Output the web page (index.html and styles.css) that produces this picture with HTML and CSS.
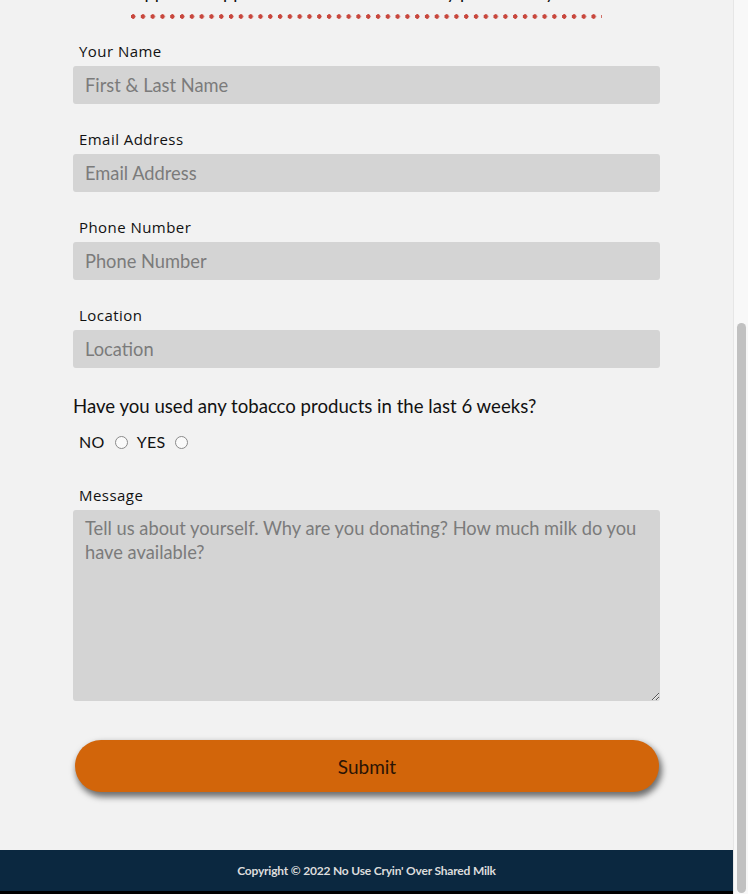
FILE: index.html
```html
<!DOCTYPE html>
<html lang="en">
<head>
<meta charset="utf-8">
<title>Donate Milk</title>
<link rel="stylesheet" href="styles.css">
</head>
<body>
<div class="window">
  <div class="page">
    <main class="content">
      <div class="intro">
        <p class="intro-text">Approved applicants will be contacted by phone or by email</p>
        <div class="dots"></div>
      </div>
      <form class="form">
        <div class="field">
          <label class="label" for="name">Your Name</label>
          <input class="input" id="name" type="text" placeholder="First &amp; Last Name">
        </div>
        <div class="field">
          <label class="label" for="email">Email Address</label>
          <input class="input" id="email" type="email" placeholder="Email Address">
        </div>
        <div class="field">
          <label class="label" for="phone">Phone Number</label>
          <input class="input" id="phone" type="tel" placeholder="Phone Number">
        </div>
        <div class="field">
          <label class="label" for="loc">Location</label>
          <input class="input" id="loc" type="text" placeholder="Location">
        </div>
        <p class="question">Have you used any tobacco products in the last 6 weeks?</p>
        <div class="radios">
          <label class="radio-label" for="no">NO</label>
          <input class="radio" id="no" type="radio" name="tobacco">
          <label class="radio-label" for="yes">YES</label>
          <input class="radio" id="yes" type="radio" name="tobacco">
        </div>
        <div class="field field-message">
          <label class="label" for="msg">Message</label>
          <textarea class="textarea" id="msg" placeholder="Tell us about yourself. Why are you donating? How much milk do you have available?"></textarea>
        </div>
        <button class="submit" type="button">Submit</button>
      </form>
    </main>
    <footer class="footer">Copyright © 2022 No Use Cryin' Over Shared Milk</footer>
    <div class="bottom-edge"></div>
  </div>
  <div class="scrollbar"><div class="thumb"></div></div>
</div>
</body>
</html>
```
FILE: styles.css
```css
html, body {
  margin: 0;
  padding: 0;
  height: 100%;
}
body {
  background: #f2f2f2;
  font-family: Lato, "Liberation Sans", sans-serif;
  color: #111;
  overflow: hidden;
}
.window {
  display: flex;
  height: 894px;
}
.page {
  flex: 1;
  display: flex;
  flex-direction: column;
  background: #f2f2f2;
}
.content {
  flex: 1;
  overflow: hidden;
}
.intro {
  display: flex;
  flex-direction: column;
  align-items: center;
  margin-top: -18px;
}
.intro-text {
  margin: 0;
  font-size: 18px;
  line-height: 20px;
  height: 20px;
  white-space: nowrap;
  overflow: hidden;
}
.dots {
  width: 471px;
  height: 5px;
  margin-top: 12px;
  margin-left: -1px;
  background-image: radial-gradient(circle at 2.2px 2.5px, #c8473d 2px, transparent 2.5px);
  background-size: 9.8px 5px;
  background-repeat: repeat-x;
}
.form {
  width: 587px;
  margin: 22px auto 0;
  display: flex;
  flex-direction: column;
}
.field {
  display: flex;
  flex-direction: column;
  margin-bottom: 25px;
}
.label {
  font-family: "Open Sans", "Liberation Sans", sans-serif;
  font-size: 15px;
  line-height: 20px;
  letter-spacing: 0.45px;
  padding-left: 6px;
  margin-bottom: 5px;
  color: #111;
}
.input, .textarea {
  box-sizing: border-box;
  width: 100%;
  border: none;
  border-radius: 3px;
  background: #d4d4d4;
  font-family: Lato, "Liberation Sans", sans-serif;
  font-size: 18.3px;
  color: #333;
  padding: 0 12px;
  outline: none;
}
.input {
  height: 38px;
}
.input::placeholder, .textarea::placeholder {
  color: #7b7b7b;
}
.question {
  margin: 1px 0 0;
  font-size: 18.6px;
  line-height: 24px;
  color: #111;
}
.radios {
  display: flex;
  align-items: center;
  padding-left: 6px;
  margin-top: 13px;
  height: 22px;
  margin-bottom: 32px;
}
.radio-label {
  font-size: 16px;
  line-height: 22px;
  letter-spacing: 0.3px;
}
.radio {
  appearance: none;
  -webkit-appearance: none;
  width: 13px;
  height: 13px;
  margin: 0 9px 0 10px;
  border: 1px solid #8a8a8a;
  border-radius: 50%;
  background: #fafafa;
  box-sizing: border-box;
}
.field-message {
  margin-bottom: 39px;
}
.textarea {
  height: 191px;
  padding: 6px 12px;
  line-height: 24px;
  resize: vertical;
}
.submit {
  align-self: center;
  width: 584px;
  height: 52px;
  margin-left: 1px;
  border: none;
  border-radius: 26px;
  background: #d2650a;
  box-shadow: 2px 4px 6px 1px rgba(0, 0, 0, 0.55);
  font-family: Lato, "Liberation Sans", sans-serif;
  font-size: 19px;
  color: #2a1405;
  cursor: pointer;
}
.footer {
  height: 41px;
  background: #0b2840;
  color: #dcdcdc;
  font-family: Lato, "Liberation Sans", sans-serif;
  font-size: 12px;
  font-weight: 700;
  display: flex;
  align-items: center;
  justify-content: center;
  letter-spacing: -0.2px;
}
.bottom-edge {
  height: 3px;
  background: #000;
}
.scrollbar {
  width: 15px;
  background: #f8f8f8;
  border-left: 1px solid #e6e6e6;
  box-sizing: border-box;
  display: flex;
  flex-direction: column;
  align-items: center;
  padding-top: 323px;
}
.thumb {
  width: 9px;
  flex: 1;
  margin-bottom: 1px;
  border-radius: 5px;
  background: #c1c1c1;
}
```
